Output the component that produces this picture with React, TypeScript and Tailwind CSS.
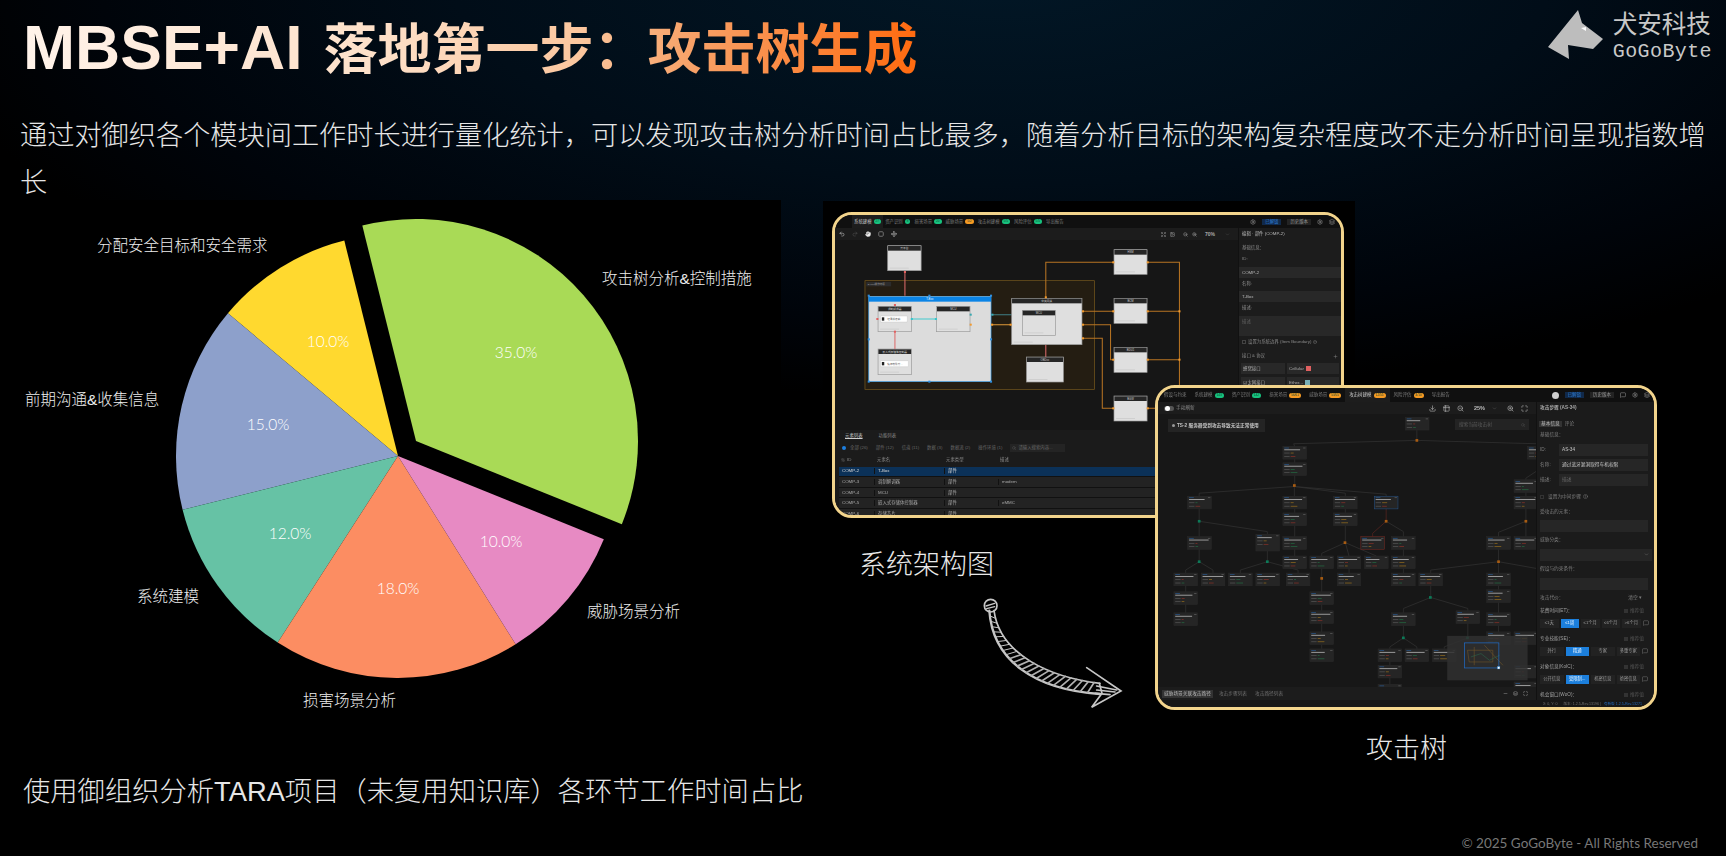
import {
  ArrowUpDown,
  ChevronDown,
  CircleHelp,
  Download,
  Expand,
  Hand,
  Image,
  Layers,
  Maximize,
  MessageSquare,
  Minus,
  Move,
  Plus,
  Redo2,
  Search,
  Settings,
  SquareDashed,
  Table2,
  Undo2,
  ZoomIn,
  ZoomOut,
} from "lucide-react";

// ---------- pie chart ----------
const slices = [
  { name: "攻击树分析&控制措施", pct: "35.0%", from: -22, to: 104, color: "#a9da56", dx: 18, dy: -15, lx: 602, ly: 278, px: 516, py: 352 },
  { name: "分配安全目标和安全需求", pct: "10.0%", from: 104, to: 140, color: "#ffd92f", dx: 0, dy: 0, lx: 97, ly: 245, px: 328, py: 341 },
  { name: "前期沟通&收集信息", pct: "15.0%", from: 140, to: 194, color: "#8da0cb", dx: 0, dy: 0, lx: 25, ly: 399, px: 268, py: 424 },
  { name: "系统建模", pct: "12.0%", from: 194, to: 237.2, color: "#66c2a5", dx: 0, dy: 0, lx: 137, ly: 596, px: 290, py: 533 },
  { name: "损害场景分析", pct: "18.0%", from: 237.2, to: 302, color: "#fc8d62", dx: 0, dy: 0, lx: 303, ly: 700, px: 398, py: 588 },
  { name: "威胁场景分析", pct: "10.0%", from: 302, to: 338, color: "#e78ac3", dx: 0, dy: 0, lx: 587, ly: 611, px: 501, py: 541 },
];

function wedge(from: number, to: number, cx: number, cy: number, r: number) {
  const a = (from * Math.PI) / 180;
  const b = (to * Math.PI) / 180;
  const large = to - from > 180 ? 1 : 0;
  return `M${cx} ${cy} L${cx + r * Math.cos(a)} ${cy - r * Math.sin(a)} A${r} ${r} 0 ${large} 0 ${cx + r * Math.cos(b)} ${cy - r * Math.sin(b)} Z`;
}

function PieChart() {
  return (
    <svg viewBox="16 200 765 570" className="block h-full w-full">
      {slices.map((s) => (
        <path key={s.name} d={wedge(s.from, s.to, 398 + s.dx, 456 + s.dy, 222)} fill={s.color} />
      ))}
      {slices.map((s) => (
        <g key={s.name + "t"}>
          <text x={s.lx} y={s.ly + 5.5} fontSize="15.5" fontWeight="300" fill="#eeeeee">
            {s.name}
          </text>
          <text x={s.px} y={s.py + 5.5} fontSize="15.5" fontWeight="300" fill="#ffffff" textAnchor="middle" fontFamily="Lato, sans-serif">
            {s.pct}
          </text>
        </g>
      ))}
    </svg>
  );
}

// ---------- sketched arrow ----------
type Pt = [number, number];
function bez(p: Pt[], t: number): Pt {
  const u = 1 - t;
  const f = (i: number) => u * u * u * p[0][i] + 3 * u * u * t * p[1][i] + 3 * u * t * t * p[2][i] + t * t * t * p[3][i];
  return [f(0), f(1)];
}
const upper: Pt[] = [[132, 92], [150, 225], [300, 292], [450, 310]];
const lower: Pt[] = [[118, 92], [128, 240], [250, 328], [450, 342]];

function SketchArrow() {
  const ticks = Array.from({ length: 24 }, (_, i) => 0.06 + (i / 24) * 0.94);
  return (
    <svg viewBox="0 0 660 420" className="absolute left-[169px] top-[380px] h-[140px] w-[220px]" fill="none" stroke="#c6c6c6" strokeLinecap="round">
      <circle cx="122" cy="77" r="19" strokeWidth="5" />
      <path d="M108 78 L134 70 M110 86 L134 80" strokeWidth="4" />
      <path d="M132 92 C150 225 300 292 450 310" strokeWidth="5" />
      <path d="M118 92 C128 240 250 328 450 342" strokeWidth="7" />
      {ticks.map((t) => {
        const a = bez(upper, t);
        const b = bez(lower, Math.max(0, t - 0.025));
        return <line key={t} x1={a[0]} y1={a[1]} x2={b[0]} y2={b[1]} strokeWidth={t > 0.4 ? 5 : 3} stroke={t > 0.4 ? "#b0b0b0" : "#c6c6c6"} />;
      })}
      <path d="M410 263 L513 333 L425 382 L456 340 L448 310" strokeWidth="5" />
      <path d="M440 318 L500 330 M440 330 L495 336 M436 340 L480 344" strokeWidth="5" />
    </svg>
  );
}

// ---------- small window parts ----------
function Tab(props: { label: string; badge?: string; color?: string; active?: boolean; tight?: boolean }) {
  return (
    <div className={`flex h-full items-center gap-[2px] ${props.tight ? "px-[2px]" : "px-[4px]"} ${props.active ? "bg-[#1d1d1d] text-[#c9c9c9]" : "text-[#7d7d7d]"}`}>
      <span>{props.label}</span>
      {props.badge && (
        <span className={`rounded-full px-[2px] text-[3.2px] leading-[5px] text-[#143] ${props.color}`}>{props.badge}</span>
      )}
    </div>
  );
}

function ArchNode(props: { x: number; y: number; w: number; h: number; label: string; selected?: boolean }) {
  const { x, y, w, h, label } = props;
  return (
    <g>
      <rect x={x} y={y} width={w} height={h} fill="#dfdfdf" stroke="#9a9a9a" strokeWidth="2" />
      <rect x={x + 1} y={y + 1} width={w - 2} height="14" fill="#262626" />
      <text x={x + w / 2} y={y + 11} fontSize="8" textAnchor="middle" fill="#cfcfcf">
        {label}
      </text>
      <rect x={x + 6} y={y + h - 9} width="55" height="3" fill="#cfcfcf" />
    </g>
  );
}

function ArchCanvas() {
  const wire = "#b87423";
  const ports: Pt[] = [[853, 172], [953, 172], [853, 319], [953, 319], [1045, 319], [853, 464], [953, 464], [1045, 464], [853, 610], [953, 610], [657, 277], [765, 319], [765, 359], [765, 400], [555, 359], [501, 359], [439, 359]];
  const handles: Pt[] = [[143, 272], [319, 272], [498, 272], [143, 403], [498, 403], [143, 530], [319, 530], [498, 530]];
  return (
    <svg viewBox="45 105 1170 570" preserveAspectRatio="none" className="block h-full w-full">
      <rect x="132" y="227" width="666" height="326" fill="#241d12" stroke="#7b5c1e" strokeWidth="2" />
      <rect x="136" y="231" width="72" height="13" fill="#2c2c2c" />
      <text x="140" y="241" fontSize="7.5" fill="#9a9a9a">E-376操作环境</text>
      <g fill="none" stroke={wire} strokeWidth="3">
        <path d="M657 280 V172 H855" />
        <path d="M951 172 H1045 V610 H951" />
        <path d="M762 319 H855 M951 319 H1045" />
        <path d="M762 359 H845 V464 H855 M951 464 H1045" />
        <path d="M762 400 H821 V610 H855" />
        <path d="M437 359 H558" stroke="#e09a3a" />
        <path d="M437 329 H558" stroke="#3f7f86" />
      </g>
      <path d="M248 197 V272 M219 380 V432 M657 419 V456" stroke="#dc6a6a" strokeWidth="3" />
      <ArchNode x={198} y={122} w={97} h={75} label="云平台" />
      <ArchNode x={855} y={134} w={96} h={74} label="HSM" />
      <ArchNode x={855} y={280} w={96} h={75} label="BCM" />
      <ArchNode x={855} y={427} w={96} h={75} label="BDU1" />
      <ArchNode x={855} y={573} w={96} h={75} label="BGW" />
      <ArchNode x={601} y={456} w={107} h={75} label="OBD口" />
      <ArchNode x={558} y={280} w={204} h={139} label="中央网关" />
      <ArchNode x={589} y={316} w={96} h={75} label="MCU" />
      <rect x="143" y="274" width="355" height="256" fill="#dcdcdc" stroke="#3d9fe8" strokeWidth="2" />
      <rect x="143" y="276" width="355" height="14" fill="#0b84e6" />
      <text x="320" y="286" fontSize="8" textAnchor="middle" fill="#e8f4ff">T-Box</text>
      <ArchNode x={170} y={304} w={97} h={76} label="调制解调器" />
      <ArchNode x={340} y={304} w={97} h={76} label="MCU" />
      <ArchNode x={170} y={432} w={97} h={77} label="嵌入式存储体控制器" />
      <path d="M219 380 V432" stroke="#dc6a6a" strokeWidth="3" />
      <path d="M267 342 H340" stroke="#69cfd2" strokeWidth="4" />
      <rect x="177" y="333" width="78" height="18" rx="2" fill="#ffffff" stroke="#bbbbbb" />
      <rect x="181" y="337" width="7" height="10" fill="#222222" />
      <text x="197" y="345" fontSize="7.5" fill="#555555">记录并传输</text>
      <rect x="177" y="467" width="81" height="18" rx="2" fill="#ffffff" stroke="#bbbbbb" />
      <rect x="181" y="471" width="7" height="10" fill="#222222" />
      <text x="197" y="479" fontSize="7.5" fill="#555555">缓存软件升...</text>
      {ports.map((p) => (
        <rect key={p.join()} x={p[0] - 3} y={p[1] - 3} width="6" height="6" fill="#f29a2e" />
      ))}
      <rect x="165" y="339" width="6" height="6" fill="#e06060" />
      <rect x="216" y="297" width="6" height="6" fill="#e06060" />
      <rect x="245" y="198" width="6" height="6" fill="#e06060" />
      <rect x="216" y="377" width="6" height="6" fill="#e06060" />
      <rect x="265" y="339" width="6" height="6" fill="#38c4c9" />
      <rect x="335" y="339" width="6" height="6" fill="#38c4c9" />
      <rect x="436" y="326" width="6" height="6" fill="#38a8b0" />
      <rect x="499" y="326" width="6" height="6" fill="#38a8b0" />
      {handles.map((p) => (
        <rect key={p.join()} x={p[0] - 3} y={p[1] - 3} width="6" height="6" fill="#2f8fe0" />
      ))}
    </svg>
  );
}

const archRows = [
  ["COMP-2", "T-Box", "部件", ""],
  ["COMP-3", "调制解调器", "部件", "modem"],
  ["COMP-4", "MCU", "部件", ""],
  ["COMP-5", "嵌入式存储体控制器", "部件", "eMMC"],
  ["COMP-6", "存储芯片", "部件", ""],
];

// first window: system architecture
function ArchWindow() {
  return (
    <div className="absolute left-[51px] top-[12px] h-[306px] w-[512px] overflow-hidden rounded-[20px] border-[3px] border-[#f2d48c] bg-[#191919]">
      <div className="flex h-full w-full flex-col text-[4.4px] leading-[6px] blur-[0.45px]">
        <div className="flex h-[13px] shrink-0 items-center bg-[#101010] pl-[17px] pr-[6px]">
          <Tab tight label="系统建模" badge="27" color="bg-[#17c27e]" active />
          <Tab tight label="资产识别" badge="8" color="bg-[#17c27e]" />
          <Tab tight label="损害场景" badge="20" color="bg-[#17c27e]" />
          <Tab tight label="威胁场景" badge="5/2" color="bg-[#f59a23]" />
          <Tab tight label="攻击树建模" badge="5/5" color="bg-[#17c27e]" />
          <Tab tight label="风险评估" badge="5/5" color="bg-[#17c27e]" />
          <Tab tight label="导出报告" />
          <div className="ml-auto flex items-center gap-[6px] text-[#9a9a9a]">
            <Settings size={6} />
            <span className="bg-[#10294a] px-[3px] text-[#2f7fd6]">已解锁</span>
            <span className="bg-[#232323] px-[3px]">历史版本</span>
            <Settings size={6} />
            <Layers size={6} />
          </div>
        </div>
        <div className="flex min-h-0 flex-1">
          <div className="flex w-[403px] shrink-0 flex-col">
            <div className="flex h-[12px] shrink-0 items-center gap-[7px] bg-[#1c1c1c] pl-[4px] pr-[8px] text-[#d8d8d8]">
              <Undo2 size={6} />
              <Redo2 size={6} className="text-[#555555]" />
              <Hand size={6} fill="#eeeeee" />
              <SquareDashed size={6} />
              <Move size={6} />
              <div className="ml-auto flex items-center gap-[4px] text-[#aaaaaa]">
                <Expand size={5} />
                <Image size={5} />
                <ZoomOut size={5} className="ml-[4px]" />
                <ZoomIn size={5} />
                <span className="ml-[4px] text-[5px] font-bold">70%</span>
                <ChevronDown size={5} className="ml-[6px] text-[#555555]" />
              </div>
            </div>
            <div className="h-[190px] shrink-0 bg-[#161616]">
              <ArchCanvas />
            </div>
            <div className="min-h-0 flex-1 bg-[#1b1b1b] text-[#8a8a8a]">
              <div className="flex h-[11px] items-center gap-[16px] pl-[10px]">
                <span className="text-[#cccccc] underline">元素列表</span>
                <span>功能列表</span>
              </div>
              <div className="flex h-[13px] items-center gap-[8px] pl-[7px] text-[#666666]">
                <span className="size-[4px] rounded-full bg-[#1d7fe0]" />
                <span className="-ml-[4px]">全部 (26)</span>
                <span>部件 (12)</span>
                <span>信道 (11)</span>
                <span>数据 (3)</span>
                <span>数据流 (2)</span>
                <span>操作环境 (1)</span>
                <span className="flex h-[8px] w-[55px] items-center gap-[2px] bg-[#242424] pl-[2px]">
                  <Search size={4} />
                  请输入搜索内容...
                </span>
              </div>
              <div className="ml-[4px] grid h-[12.7px] grid-cols-[35px_70px_54px_1fr] items-center">
                <span className="flex items-center gap-[2px] pl-[2px]">
                  <ArrowUpDown size={4} />
                  ID
                </span>
                <span className="pl-[3px]">元素名</span>
                <span className="pl-[2px]">元素类型</span>
                <span className="pl-[2px]">描述</span>
              </div>
              {archRows.map((r, i) => (
                <div
                  key={r[0]}
                  className={`ml-[4px] grid h-[10.6px] grid-cols-[35px_70px_54px_1fr] items-center border-b border-[#111111] ${i === 0 ? "bg-[#0b3158] text-[#d5d5d5]" : "bg-[#232323] text-[#a8a8a8]"}`}
                >
                  <span className="pl-[3px]">{r[0]}</span>
                  <span className="border-l border-[#111111] pl-[3px]">{r[1]}</span>
                  <span className="border-l border-[#111111] pl-[3px]">{r[2]}</span>
                  <span className="border-l border-[#111111] pl-[3px]">{r[3]}</span>
                </div>
              ))}
            </div>
          </div>
          <div className="flex-1 border-l border-[#111111] bg-[#1c1c1c] text-[#8a8a8a]">
            <div className="flex h-[12px] items-center px-[3px] text-[#b8b8b8]">编辑 · 部件 (COMP-2)</div>
            <div className="mt-[5px] px-[3px]">基础信息：</div>
            <div className="mt-[5px] px-[3px]">ID:</div>
            <div className="mt-[5px] flex h-[11px] items-center bg-[#282828] px-[3px] text-[#b5b5b5]">COMP-2</div>
            <div className="mt-[3px] px-[3px]">名称:</div>
            <div className="mt-[4px] flex h-[11px] items-center bg-[#282828] px-[3px] text-[#b5b5b5]">T-Box</div>
            <div className="mt-[3px] px-[3px]">描述:</div>
            <div className="mt-[5px] h-[20px] bg-[#282828] px-[3px] pt-[3px] text-[#5f5f5f]">描述</div>
            <div className="mt-[3px] flex items-center gap-[2px] px-[3px]">
              <span className="size-[4px] border border-[#444444]" />
              设置为系统边界 (Item Boundary)
              <CircleHelp size={4} />
            </div>
            <div className="mt-[8px] flex items-center justify-between px-[3px]">
              接口 & 协议
              <Plus size={5} />
            </div>
            <div className="mt-[4px] flex items-center gap-[2px] px-[2px]">
              <span className="flex h-[11px] w-[44px] items-center bg-[#282828] px-[2px] text-[#aaaaaa]">蜂窝接口</span>
              <span className="flex h-[11px] flex-1 items-center gap-[2px] bg-[#282828] px-[2px] text-[#aaaaaa]">
                Cellular
                <span className="size-[5px] bg-[#e06060]" />
              </span>
            </div>
            <div className="mt-[3px] flex items-center gap-[2px] px-[2px]">
              <span className="flex h-[11px] w-[44px] items-center bg-[#282828] px-[2px] text-[#aaaaaa]">以太网接口</span>
              <span className="flex h-[11px] flex-1 items-center gap-[2px] bg-[#282828] px-[2px] text-[#aaaaaa]">
                Ether...
                <span className="size-[5px] bg-[#78b0b8]" />
              </span>
            </div>
          </div>
        </div>
      </div>
    </div>
  );
}

// ---------- second window: attack tree ----------
const treeNodes: Pt[] = [
  [771, 118], [408, 205], [408, 254], [1133, 205],
  [126, 354], [408, 354], [558, 354], [679, 354], [1093, 305], [1093, 354],
  [408, 404], [558, 404],
  [126, 475], [328, 468], [408, 475], [639, 475], [730, 475], [1012, 475], [1093, 475],
  [408, 533], [488, 533], [569, 533], [650, 533], [730, 533],
  [85, 584], [166, 584], [247, 584], [328, 584], [418, 584], [569, 584], [730, 584], [811, 584], [1012, 584],
  [85, 640], [488, 640], [1012, 634],
  [85, 703], [488, 697], [730, 703], [921, 697], [1012, 703],
  [488, 760], [1012, 760], [1093, 760],
  [488, 811], [690, 811], [770, 811], [851, 811], [1093, 860],
  [690, 860], [690, 917], [1093, 910],
];
const gates: { p: Pt; c: string }[] = [
  { p: [805, 187], c: "#a85c12" }, { p: [442, 322], c: "#a85c12" }, { p: [160, 429], c: "#0c7a58" }, { p: [714, 429], c: "#a85c12" },
  { p: [1128, 429], c: "#a85c12" }, { p: [592, 493], c: "#a85c12" }, { p: [160, 550], c: "#0c7a58" }, { p: [362, 550], c: "#0c7a58" },
  { p: [523, 600], c: "#a85c12" }, { p: [1047, 550], c: "#a85c12" }, { p: [845, 657], c: "#0c7a58" }, { p: [765, 778], c: "#0c7a58" }, { p: [955, 778], c: "#0c7a58" },
];
const treeEdges = [
  "M805 156 V187 L440 197 L443 205", "M805 187 L1158 197", "M443 243 V254", "M443 292 V322", "M442 325 L160 345 V354", "M442 325 V354",
  "M442 325 L593 345 V354", "M442 325 L714 348 V354", "M160 392 V475", "M160 429 L362 460 V468", "M443 392 V404", "M443 442 V475", "M443 513 V533",
  "M593 392 V404", "M593 442 V493 L523 525 V533", "M593 493 L604 533", "M593 493 L685 533", "M714 429 L765 460 V475",
  "M160 513 V550 L120 575 V584", "M160 550 L201 575 V584", "M362 518 V550 L282 575 V584", "M362 550 L453 575 V584", "M604 571 V584", "M765 513 V533", "M765 571 V584",
  "M523 571 V640", "M523 678 V697", "M523 735 V760", "M523 798 V811", "M120 622 V640", "M120 678 V703",
  "M846 622 V657 L765 690 V703", "M846 657 L956 690 V697", "M765 741 V778 L725 805 V811", "M765 778 L805 805 V811", "M956 735 V778 L886 805 V811",
  "M1128 343 V354", "M1128 392 V429 L1047 462 V475", "M1128 429 V475", "M1047 513 V550 L846 575 V584", "M1047 550 V584", "M1047 550 L1158 570",
  "M1047 622 V634", "M1047 672 V703", "M1047 741 V760", "M1158 280 L1128 300 V305", "M725 849 V860", "M725 898 V917",
];
const riskColors = ["#a8352a", "#b8841c", "#23804a", "#a8352a", "#23804a", "#b8841c"];

function TreeNode(props: { p: Pt; i: number }) {
  const [x, y] = props.p;
  const tall = y === 468;
  const border = props.i === 7 ? "#24558f" : props.i === 15 ? "#7a2a22" : "#2a2a2a";
  const a = riskColors[props.i % 6];
  const b = riskColors[(props.i + 2) % 6];
  return (
    <g>
      <rect x={x} y={y} width="70" height={tall ? 50 : 38} fill="#252525" stroke={border} strokeWidth="1.5" />
      <rect x={x + 4} y={y + 4} width="14" height="1.5" fill="#2a6cb8" />
      <rect x={x + 60} y={y + 4} width="7" height="1.5" fill="#777777" />
      <rect x={x + 4} y={y + 9} width={40 + ((props.i * 7) % 22)} height="2.4" fill="#b5b5b5" />
      <rect x={x + 4} y={y + 19} width="16" height="1.6" fill="#666666" />
      <rect x={x + 23} y={y + 19} width={6 + (props.i % 4) * 3} height="1.6" fill={a} />
      <rect x={x + 4} y={y + 29} width="16" height="1.6" fill="#666666" />
      <rect x={x + 23} y={y + 29} width={8 + (props.i % 3) * 6} height="1.6" fill={b} />
    </g>
  );
}

function TreeCanvas() {
  return (
    <svg viewBox="38 108 1120 817" preserveAspectRatio="none" className="block h-full w-full">
      <g fill="none" stroke="#343434" strokeWidth="2">
        {treeEdges.map((d) => (
          <path key={d} d={d} />
        ))}
      </g>
      <path d="M714 392 V429 L674 465 V475" fill="none" stroke="#5f261f" strokeWidth="2" />
      {treeNodes.map((p, i) => (
        <TreeNode key={p.join()} p={p} i={i} />
      ))}
      {gates.map((g) => (
        <rect key={g.p.join()} x={g.p[0] - 4} y={g.p[1] - 4} width="8" height="8" fill={g.c} />
      ))}
      {/* minimap */}
      <rect x="895" y="772" width="238" height="133" fill="#303030" fillOpacity="0.85" />
      <g fill="none" strokeWidth="1.5">
        <path d="M955 815 H1030 V850 H960 Z M975 805 V860 M1005 800 L1060 860" stroke="#7a5c28" />
        <path d="M965 835 L995 825 L1020 845 L1050 830" stroke="#2a6e4e" />
      </g>
      <rect x="946" y="793" width="102" height="75" fill="none" stroke="#1f6fd0" strokeWidth="2" />
      <rect x="1044" y="864" width="7" height="7" fill="#ffffff" stroke="#2f8fe0" />
    </svg>
  );
}

function Seg(props: { items: string[]; active: number; w: string }) {
  return (
    <div className="mt-[5px] flex h-[9px] items-center gap-[2px] pl-[3px] pr-[4px]">
      {props.items.map((t, i) => (
        <span
          key={t}
          className={`flex h-full items-center justify-center whitespace-nowrap text-[4.3px] ${props.w} ${i === props.active ? "bg-[#1c7fdc] text-[#e8f4ff]" : "bg-[#222222] text-[#9a9a9a]"}`}
        >
          {t}
        </span>
      ))}
      <MessageSquare size={6} className="text-[#777777]" />
    </div>
  );
}

function RecLabel(props: { label: string; top: string }) {
  return (
    <div className={`${props.top} flex items-center justify-between pl-[3px] pr-[10px] text-[#a0a0a0]`}>
      <span>{props.label}</span>
      <span className="flex items-center gap-[2px] text-[#555555]">
        <span className="size-[4px] bg-[#333333]" />
        推荐值
      </span>
    </div>
  );
}

function TreeWindow() {
  return (
    <div className="absolute left-[374px] top-[185px] h-[325px] w-[502px] overflow-hidden rounded-[20px] border-[3px] border-[#f2d48c] bg-[#191919]">
      <div className="flex h-full w-full flex-col text-[4.7px] leading-[6px] blur-[0.45px]">
        <div className="flex h-[14px] shrink-0 items-center bg-[#101010] pl-[2px] pr-[4px] text-[4.5px]">
          <Tab label="假设与约束" />
          <Tab label="系统建模" badge="143" color="bg-[#17c27e]" />
          <Tab label="资产识别" badge="142" color="bg-[#17c27e]" />
          <Tab label="损害场景" badge="56/61" color="bg-[#f59a23]" />
          <Tab label="威胁场景" badge="53/55" color="bg-[#f59a23]" />
          <Tab label="攻击树建模" badge="12/55" color="bg-[#f59a23]" active />
          <Tab label="风险评估" badge="4/10" color="bg-[#f59a23]" />
          <Tab label="导出报告" />
          <div className="ml-auto flex items-center gap-[6px] text-[#9a9a9a]">
            <span className="size-[7px] rounded-full bg-[#cfcfcf]" />
            <span className="bg-[#10294a] px-[3px] text-[#2f7fd6]">已解锁</span>
            <span className="bg-[#232323] px-[3px]">历史版本</span>
            <MessageSquare size={6} />
            <Settings size={6} />
            <Layers size={6} />
          </div>
        </div>
        <div className="flex min-h-0 flex-1">
          <div className="flex w-[378px] shrink-0 flex-col">
            <div className="flex h-[12px] shrink-0 items-center bg-[#1c1c1c] pl-[6px] pr-[8px] text-[#8a8a8a]">
              <span className="h-[5px] w-[10px] rounded-full bg-[#555555] pl-[1px]">
                <span className="block size-[5px] rounded-full bg-white" />
              </span>
              <span className="ml-[2px]">手动刷新</span>
              <div className="ml-auto flex items-center gap-[7px] text-[#bbbbbb]">
                <Download size={7} />
                <Table2 size={7} />
                <ZoomOut size={7} />
                <span className="ml-[3px] text-[5.5px] font-bold">25%</span>
                <ChevronDown size={5} className="text-[#666666]" />
                <ZoomIn size={7} className="ml-[3px]" />
                <Maximize size={7} />
              </div>
            </div>
            <div className="relative h-[273px] shrink-0 bg-[#171717]">
              <TreeCanvas />
              <div className="absolute left-[10px] top-[5px] flex h-[13px] w-[97px] items-center gap-[2px] bg-[#242424] pl-[4px] text-[4.7px] font-bold text-[#c4c4c4]">
                <span className="size-[3px] rounded-full bg-[#999999]" />
                TS-2 服务器受到攻击导致无法正常使用
              </div>
              <div className="absolute left-[297px] top-[5px] flex h-[11px] w-[74px] items-center justify-between bg-[#232323] px-[4px] text-[#5d5d5d]">
                搜索当前攻击树
                <Search size={4} />
              </div>
            </div>
            <div className="flex min-h-0 flex-1 items-center bg-[#1c1c1c] pl-[4px] pr-[8px] text-[#6f6f6f]">
              <span className="bg-[#333333] px-[2px] py-[1px] text-[#bdbdbd]">威胁场景关联攻击路径</span>
              <span className="ml-[6px]">攻击步骤列表</span>
              <span className="ml-[8px]">攻击路径列表</span>
              <div className="ml-auto flex items-center gap-[5px] text-[#aaaaaa]">
                <Minus size={5} />
                <Layers size={5} />
                <Maximize size={5} />
              </div>
            </div>
          </div>
          <div className="flex-1 overflow-hidden border-l border-[#111111] bg-[#1b1b1b] text-[#7f7f7f]">
            <div className="flex h-[12px] items-center px-[3px] font-bold text-[#a8a8a8]">攻击步骤 (AS-34)</div>
            <div className="mt-[5px] flex h-[9px] items-center gap-[3px] px-[2px]">
              <span className="bg-[#333333] px-[2px] text-[#bdbdbd]">基本信息</span>
              <span>评论</span>
            </div>
            <div className="mt-[4px] px-[3px]">基础信息：</div>
            <div className="mt-[6px] flex h-[12px] items-center pl-[3px] pr-[6px]">
              <span className="w-[19px]">ID:</span>
              <span className="flex h-full flex-1 items-center bg-[#262626] pl-[3px] text-[#c4c4c4]">AS-34</span>
            </div>
            <div className="mt-[3px] flex h-[12px] items-center pl-[3px] pr-[6px]">
              <span className="w-[19px]">名称:</span>
              <span className="flex h-full flex-1 items-center bg-[#262626] pl-[3px] text-[#c4c4c4]">通过蓝牙漏洞取得车机权限</span>
            </div>
            <div className="mt-[3px] flex h-[11.5px] items-center pl-[3px] pr-[6px]">
              <span className="w-[19px]">描述:</span>
              <span className="flex h-full flex-1 items-center bg-[#262626] pl-[3px] text-[#666666]">描述</span>
            </div>
            <div className="mt-[8px] flex items-center gap-[2px] pl-[3px]">
              <span className="mr-[2px] size-[4px] border border-[#333333]" />
              设置为中间步骤
              <CircleHelp size={5} />
            </div>
            <div className="mt-[9px] px-[3px]">受攻击的元素：</div>
            <div className="ml-[3px] mr-[6px] mt-[5px] h-[12px] bg-[#262626]" />
            <div className="mt-[5px] px-[3px]">威胁分类：</div>
            <div className="ml-[3px] mr-[2px] mt-[6px] flex h-[12px] items-center justify-end bg-[#262626] pr-[3px]">
              <ChevronDown size={5} />
            </div>
            <div className="mt-[5px] px-[3px]">假设与约束条件：</div>
            <div className="ml-[3px] mr-[6px] mt-[6px] h-[12px] bg-[#262626]" />
            <div className="mt-[5px] flex justify-between pl-[3px] pr-[12px]">
              <span>攻击代价：</span>
              <span>清空 ▾</span>
            </div>
            <RecLabel label="花费时间(ET)：" top="mt-[7px]" />
            <Seg items={["≤1天", "≤1周", "≤1个月", "≤6个月", ">6个月"]} active={1} w="w-[18.5px]" />
            <RecLabel label="专业技能(SE)：" top="mt-[8px]" />
            <Seg items={["外行", "精通", "专家", "多重专家"]} active={1} w="w-[23.5px]" />
            <RecLabel label="对象信息(KoIC)：" top="mt-[8px]" />
            <Seg items={["公开信息", "受限制...", "机密信息", "绝密信息"]} active={1} w="w-[23.5px]" />
            <RecLabel label="机会窗口(WoO)：" top="mt-[8px]" />
          </div>
        </div>
        <div className="flex h-[7px] shrink-0 items-center justify-end gap-[3px] bg-[#161616] pr-[12px] text-[3.6px] text-[#6f6f6f]">
          <span>X: 0, Y: 0</span>
          <span className="ml-[3px]">版本: 1.2.5-Rev.13196 |</span>
          <span className="text-[#2166b8]">有新版 1.2.5-Rev.13271</span>
        </div>
      </div>
    </div>
  );
}

// ---------- page ----------
export default function App() {
  return (
    <div className="flex h-[856px] w-[1726px] flex-col overflow-hidden bg-[radial-gradient(ellipse_1100px_430px_at_58%_-30px,#021726_0%,#010d18_50%,#00040a_82%,#000000_100%)] font-['Liberation_Sans','Noto_Sans_CJK_SC',sans-serif]">
      <header className="flex h-[112px] shrink-0 items-start justify-between">
        <h1 className="ml-[23px] mt-[17px] flex w-fit items-baseline bg-[linear-gradient(90deg,#fff3ea_0%,#fde0c8_40%,#fbc79f_62%,#f7a36a_74%,#ff6a0f_100%)] bg-clip-text font-bold leading-[60px] text-transparent">
          <span className="text-[62.5px]">MBSE+AI</span>
          <span className="ml-[21px] text-[54px]">落地第一步：攻击树生成</span>
        </h1>
        <div className="mr-[14px] mt-[8px] flex items-start gap-[9px]">
          <svg width="56" height="52" viewBox="1548 9 56 52" className="mt-[1px]">
            <polygon points="1578,10 1582,23 1603,39 1593,49 1568,45 1569,59 1548,47" fill="#bdbdbd" />
            <polygon points="1581,28 1586,27 1586,31" fill="#ffffff" />
          </svg>
          <div className="flex flex-col text-[#c8c8c8]">
            <span className="text-[24.5px] leading-[29px] font-['Noto_Sans_CJK_SC',sans-serif]">犬安科技</span>
            <span className="mt-[5px] font-['Liberation_Mono',monospace] text-[20px] leading-[19px] tracking-[0.4px]">GoGoByte</span>
          </div>
        </div>
      </header>
      <p className="h-[88px] w-[1716px] shrink-0 pl-[20px] text-[27.2px] font-light leading-[47px] text-[#e6e6e6]">
        通过对御织各个模块间工作时长进行量化统计，可以发现攻击树分析时间占比最多，随着分析目标的架构复杂程度改不走分析时间呈现指数增长
      </p>
      <main className="flex h-[570px] shrink-0">
        <section className="ml-[16px] h-full w-[765px] shrink-0 bg-black">
          <PieChart />
        </section>
        <section className="relative h-full flex-1">
          <div className="absolute left-[42px] top-[1px] h-[340px] w-[532px] bg-black" />
          <ArchWindow />
          <div className="absolute left-[78px] top-[347px] text-[27px] font-light leading-[36px] text-[#e8e8e8]">系统架构图</div>
          <SketchArrow />
          <TreeWindow />
          <div className="absolute left-[585px] top-[531px] text-[27px] font-light leading-[36px] text-[#e8e8e8]">攻击树</div>
        </section>
      </main>
      <div className="h-[44px] shrink-0 pl-[23px] text-[27.3px] font-light leading-[44px] text-[#e6e6e6]">
        使用御组织分析TARA项目（未复用知识库）各环节工作时间占比
      </div>
      <footer className="mt-[20px] flex justify-end pr-[28px] font-['Lato',sans-serif] text-[13.5px] leading-[18px] text-[#777777]">
        © 2025 GoGoByte - All Rights Reserved
      </footer>
    </div>
  );
}
